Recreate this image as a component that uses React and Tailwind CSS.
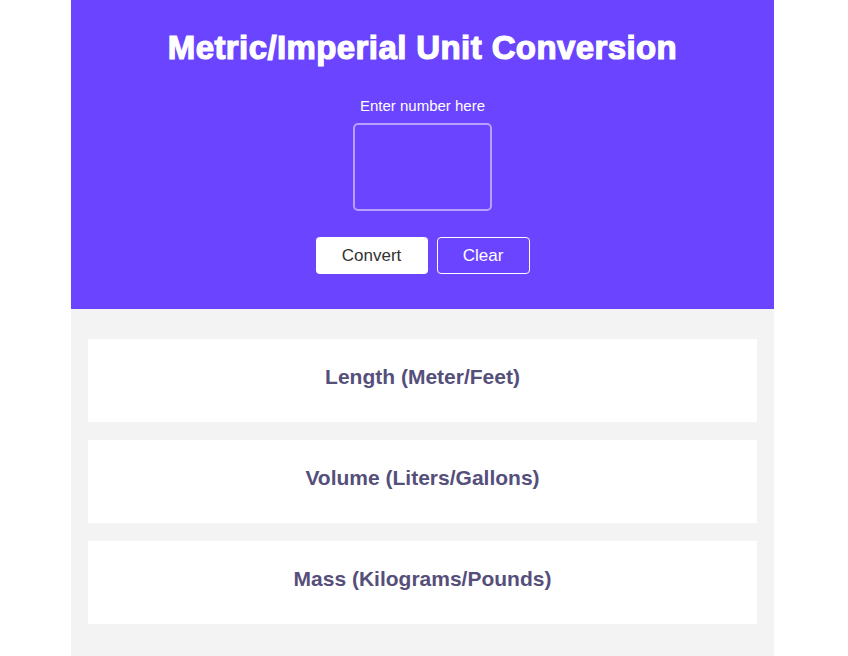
export default function App() {
  const categories = ['Length (Meter/Feet)', 'Volume (Liters/Gallons)', 'Mass (Kilograms/Pounds)'];

  return (
    <div className="min-h-screen bg-white font-['Liberation_Sans',Arial,sans-serif]">
      <div className="ml-[71px] w-[703px] bg-[#f3f3f3] min-h-[656px]">
        <header className="bg-[#6b44ff] h-[309px] flex flex-col items-center pt-[29px]">
          <h1 className="text-[33px] leading-[38px] font-black text-white tracking-[0.4px] [-webkit-text-stroke:1.2px_white]">
            Metric/Imperial Unit Conversion
          </h1>
          <label className="mt-[30px] text-[15px] leading-[18px] text-white">Enter number here</label>
          <input
            type="text"
            className="mt-[8px] w-[139px] h-[88px] rounded-[5px] border-2 border-white/50 bg-transparent outline-none text-white text-center"
          />
          <div className="mt-[26px] flex gap-[9px]">
            <button className="w-[112px] h-[37px] rounded-[4px] bg-white text-[#333] text-[17px]">Convert</button>
            <button className="w-[93px] h-[37px] rounded-[4px] border border-white text-white text-[17px]">Clear</button>
          </div>
        </header>
        <main className="px-[17px] pt-[30px] pb-[32px] flex flex-col gap-[18px]">
          {categories.map((c) => (
            <div key={c} className="bg-white h-[83px] flex items-center justify-center pb-[8px]">
              <h2 className="text-[21px] font-bold text-[#554f7a]">{c}</h2>
            </div>
          ))}
        </main>
      </div>
    </div>
  );
}
